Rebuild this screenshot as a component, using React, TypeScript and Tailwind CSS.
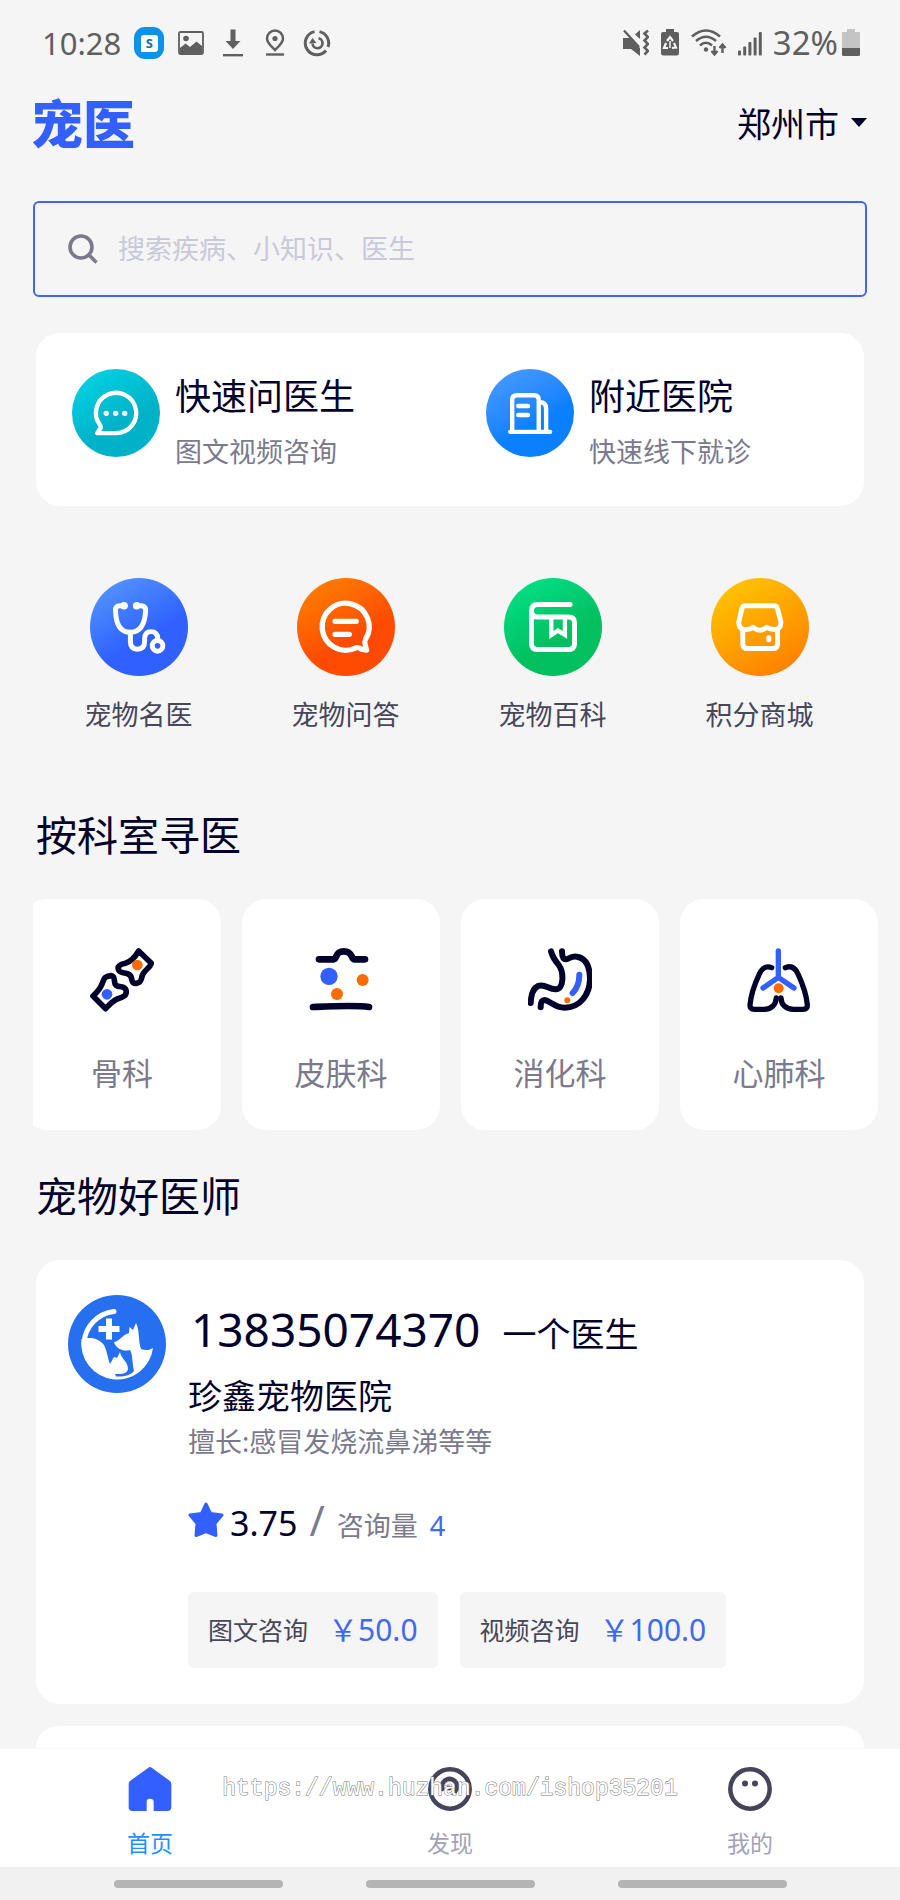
import React, { useState } from "react";

const StatusBar: React.FC = () => (
  <div className="flex h-[86px] items-center justify-between pl-[42px] pr-10 text-[#5f5f5f]">
    <div className="flex items-center gap-[14px]">
      <span className="text-[31px] leading-10">10:28</span>
      <span className="flex h-[30px] w-7 items-center justify-center rounded-[10px] bg-[#0c92ea] ring-1 ring-[#0c92ea]">
        <span className="flex h-[17px] w-[17px] items-center justify-center rounded-[3px] rounded-bl-none bg-white text-[13px] font-bold leading-4 text-[#1668b8]">
          S
        </span>
      </span>
      <svg className="h-7 w-7" viewBox="0 0 28 28" fill="none">
        <rect x="2" y="3" width="24" height="22" rx="1.500" stroke="currentColor" strokeWidth="1.800" />
        <circle cx="9" cy="9.500" r="2.800" fill="currentColor" />
        <path d="M3 19 L8.500 14.500 L13 18 L19.500 12.500 L25 17 V25 H3 Z" fill="currentColor" />
      </svg>
      <svg className="h-7 w-7" viewBox="0 0 28 28" fill="currentColor">
        <path d="M11.500 0.500 H16.500 V12 H21.500 L14 20 L6.500 12 H11.500 Z" />
        <rect x="4" y="25" width="20" height="2.400" />
      </svg>
      <svg className="h-7 w-7" viewBox="0 0 28 28" fill="none" stroke="currentColor">
        <path d="M14 21 C10 17 6 14 6 9.500 A8 8 0 0 1 22 9.500 C22 14 18 17 14 21 Z" strokeWidth="2.500" />
        <circle cx="14" cy="9.500" r="2.600" fill="currentColor" stroke="none" />
        <path d="M5 25.500 H23" strokeWidth="2.400" />
      </svg>
      <svg className="h-7 w-7" viewBox="0 0 28 28" fill="none" stroke="currentColor" strokeWidth="3">
        <path d="M11.500 2.600 A11.700 11.700 0 1 0 23 21.500" />
        <path d="M16.500 2.600 A11.700 11.700 0 0 1 25 18" />
        <path d="M15.500 9.300 A5 5 0 1 1 9.500 14.500" strokeWidth="2.600" />
        <path d="M6 14.500 L9.500 9 L13.500 14 Z" fill="currentColor" stroke="none" />
      </svg>
    </div>

    <div className="flex items-center gap-[11px]">
      <svg className="h-7 w-[26px]" viewBox="0 0 26 28" fill="currentColor">
        <path d="M0 9 H7 L17 19 V27 L8 20 H0 Z" />
        <path d="M17 1 V10 L12 5.500 Z" />
        <path d="M1 1.500 L16 18" stroke="currentColor" strokeWidth="2.400" />
        <path
          d="M25 1.500 L21.500 4.500 L25 8 L21.500 11.500 L25 15 L21.500 18.500 L25 22 L21.500 25.500"
          fill="none"
          stroke="currentColor"
          strokeWidth="2.600"
        />
      </svg>
      <svg className="h-7 w-5" viewBox="0 0 20 28">
        <path d="M6 0 H14 V3 H17 Q19 3 19 5 V24 Q19 26.500 16.500 26.500 H3.500 Q1 26.500 1 24 V5 Q1 3 3 3 H6 Z" fill="currentColor" />
        <path
          d="M7 12 L10 8 L13 12 M14 14 L16 18.500 L12 19 M8 19 H4 L6 14"
          fill="none"
          stroke="#f5f5f5"
          strokeWidth="2.200"
        />
        <path d="M10 19 V12" stroke="#f5f5f5" strokeWidth="1.500" />
      </svg>
      <svg className="h-7 w-9" viewBox="0 0 36 28" fill="none" stroke="currentColor" strokeWidth="2.600">
        <path d="M1 7.500 Q15 -4.500 29 7.500" />
        <path d="M5 12 Q15 3.500 25 12" />
        <path d="M9 16.500 Q15 11 21 16.500" />
        <circle cx="15" cy="20.500" r="2.200" fill="currentColor" stroke="none" />
        <path d="M23.500 17 V24.500 M20.500 22 L23.500 25.500 L26.500 22" strokeWidth="2.400" />
        <path d="M31.500 24 V16.500 M28.500 19 L31.500 15.500 L34.500 19" strokeWidth="2.400" />
      </svg>
      <svg className="h-7 w-6" viewBox="0 0 24 28" fill="currentColor">
        <rect x="0" y="21.500" width="3" height="5" rx="1" />
        <rect x="5.200" y="17.500" width="3" height="9" rx="1" />
        <rect x="10.400" y="13" width="3" height="13.500" rx="1" />
        <rect x="15.600" y="8.500" width="3" height="18" rx="1" />
        <rect x="20.800" y="3" width="3" height="23.500" rx="1" />
      </svg>
      <span className="flex items-center gap-1">
        <span className="text-[33px] leading-10">32%</span>
        <svg className="h-7 w-[18px]" viewBox="0 0 18 28">
          <path d="M5 0 H13 V3 H18 V20 H0 V3 H5 Z" fill="#c4c4c4" />
          <path d="M0 19 H18 V25.500 Q18 27 16.500 27 H1.500 Q0 27 0 25.500 Z" fill="currentColor" />
        </svg>
      </span>
    </div>
  </div>
);

const ChatIcon = () => (
  <svg className="h-full w-full" viewBox="0 0 262 262" fill="none" stroke="#fff" strokeWidth="13" strokeLinejoin="round">
    <path d="M131 191 A60 60 0 1 0 84 168 Q88 174 82 180 L75 191 Z" />
    <g fill="#fff" stroke="none">
      <circle cx="102" cy="132" r="8" />
      <circle cx="130" cy="132" r="8" />
      <circle cx="157" cy="132" r="8" />
    </g>
  </svg>
);

const HospitalIcon = () => (
  <svg className="h-full w-full" viewBox="0 0 262 262" fill="none" stroke="#fff" strokeWidth="13" strokeLinecap="round">
    <path d="M78 186 V92 Q78 78 92 78 H143 Q157 78 157 92 V186" />
    <path d="M160 99 Q179 99 179 118 V186" />
    <path d="M72 187 H191" />
    <path d="M96 110 H125 M96 137 H125" />
  </svg>
);

const StethoscopeIcon = () => (
  <svg className="h-full w-full" viewBox="0 0 296 296" fill="none" stroke="#fff" strokeWidth="15" strokeLinecap="round">
    <path d="M103 84 H90 Q76 84 77 98 C78 142 94 164 122 164 C150 164 166 142 168 98 Q168 86 156 84 H141" />
    <circle cx="103" cy="84" r="4" />
    <circle cx="141" cy="84" r="4" />
    <path d="M122 164 V192 Q122 215 143 215 Q165 215 165 192 V184 Q165 162 184 162 Q204 162 205 184" />
    <circle cx="204" cy="205" r="16" />
  </svg>
);

const QuestionIcon = () => (
  <svg className="h-full w-full" viewBox="0 0 296 296" fill="none" stroke="#fff" strokeWidth="16" strokeLinecap="round" strokeLinejoin="round">
    <path d="M178 211 A71 71 0 1 1 207 185 Q203 194 206 202 L210 218 L194 215 Q186 209 178 211 Z" />
    <path d="M115 131 H179 M115 170 H158" />
  </svg>
);

const BookIcon = () => (
  <svg className="h-full w-full" viewBox="0 0 296 296" fill="none" stroke="#fff" strokeWidth="15" strokeLinecap="round">
    <path d="M200 80 H102 Q83 80 83 99 V198 Q83 216 101 216 H195 Q213 216 213 198 V136 Q213 118 195 118 H102 Q83 118 83 99" />
    <path d="M143 118 V172 L163 159 L184 172 V118" strokeWidth="13" />
  </svg>
);

const ShopIcon = () => (
  <svg className="h-full w-full" viewBox="0 0 296 296" fill="none" stroke="#fff" strokeWidth="15" strokeLinejoin="round">
    <path d="M104 84 H190 Q199 84 201 94 L211 132 Q212 153 195 155 Q182 157 168 149 Q148 166 127 149 Q113 158 99 155 Q83 152 84 132 L93 94 Q95 84 104 84 Z" />
    <path d="M96 155 V199 Q96 213 110 213 H187 Q201 213 201 199 V155" />
    <rect x="167" y="173" width="15" height="21" rx="6" fill="#fff" stroke="none" />
  </svg>
);

const BoneIcon = () => (
  <svg className="h-16 w-16" viewBox="0 0 192 192" fill="none" stroke="#02022a" strokeWidth="17" strokeLinejoin="round">
    <path d="M146 9 L184 46 C180 60 166 64 159 78 C152 90 158 102 140 106 C122 108 128 94 122 84 C112 70 96 80 87 68 C79 54 92 49 106 46 C126 40 136 26 146 9 Z" />
    <path d="M47 182 L9 144 C22 132 30 124 36 108 C42 92 44 84 62 83 C80 86 68 102 78 112 C90 120 104 112 108 126 C112 144 98 148 84 152 C66 160 60 168 47 182 Z" />
    <circle cx="142" cy="51" r="16" fill="#ff6b00" stroke="none" />
    <circle cx="51" cy="139" r="16" fill="#335fff" stroke="none" />
  </svg>
);

const SkinIcon = () => (
  <svg className="h-16 w-16" viewBox="0 0 192 192" fill="none" stroke="#02022a" strokeWidth="20" strokeLinecap="round">
    <path d="M30 34 H74 C84 34 78 10 104 10 C132 10 126 34 136 34 H168" />
    <path d="M12 177 C60 175 140 171 180 177" />
    <circle cx="60" cy="85" r="26" fill="#335fff" stroke="none" />
    <circle cx="161" cy="96" r="18" fill="#ff6b00" stroke="none" />
    <circle cx="84" cy="138" r="18" fill="#ff6b00" stroke="none" />
  </svg>
);

const StomachIcon = () => (
  <svg className="h-16 w-16" viewBox="0 0 192 192" fill="none" stroke="#02022a" strokeWidth="18" strokeLinecap="round">
    <path d="M69 10 C75 30 80 36 93 52 C108 74 108 126 82 124 C62 124 50 106 30 114 C14 122 9 140 8 165" />
    <path d="M102 10 C102 24 104 34 114 34 C124 32 130 24 146 26 C176 30 186 60 186 96 C184 140 156 179 110 179 C80 179 66 158 50 156 C40 156 38 166 38 178" />
    <path d="M154 80 C154 104 148 120 134 135" stroke="#335fff" />
    <circle cx="118" cy="157" r="9" fill="#ff6b00" stroke="none" />
  </svg>
);

const LungIcon = () => (
  <svg className="h-16 w-16" viewBox="0 0 192 192" fill="none" stroke="#02022a" strokeWidth="16" strokeLinecap="round" strokeLinejoin="round">
    <path d="M74 59 C60 53 46 58 37 78 C22 110 12 140 9 170 Q8 184 22 184 H52 C74 184 86 170 88 150" />
    <path d="M115 59 C130 53 144 58 153 78 C168 110 178 140 181 170 Q182 184 168 184 H140 C116 184 103 170 102 150" />
    <path d="M94 9 V88 L48 120 M94 88 L141 120" stroke="#335fff" />
    <circle cx="95" cy="121" r="15" fill="#ff6b00" stroke="none" />
  </svg>
);

const PetAvatar = () => (
  <svg className="h-[98px] w-[98px] shrink-0" viewBox="0 0 98 98">
    <circle cx="49" cy="49" r="49" fill="#2670f0" />
    <path d="M46 16.500 A34 34 0 0 0 16 48" fill="none" stroke="#fff" strokeWidth="5" strokeLinecap="round" />
    <path d="M41 23.500 V44.500 M30.500 34 H51.500" stroke="#fff" strokeWidth="6" />
    <path
      d="M13.500 44 C20 42 30 42 36 50 C39 56 40 64 42 69 C44 66 45 63 46 62 L49 63 L52 57 C53 64 60 66 60 74 C59 79 54 79 47 79 L48 81.500 C56 82 63 80 66 76 C64 68 65 60 62 55 C56 57 48 54 46 47 C52 46 54 40 61 38 L61.500 32 L65 35 L68 28 C72 36 70 46 73 54 C78 56 82 55 85 53 A36 36 0 0 1 13.500 44 Z"
      fill="#fff"
    />
  </svg>
);

const HomeIcon = () => (
  <svg className="h-11 w-11" viewBox="0 0 132 132">
    <path
      d="M61 2 Q66 -2 71 2 L126 42 Q130 46 130 52 V120 Q130 132 118 132 H77 V104 Q77 95 66 95 Q56 95 56 104 V132 H14 Q2 132 2 120 V52 Q2 46 6 42 Z"
      fill="#335fff"
    />
  </svg>
);

const DiscoverIcon = () => (
  <svg className="h-11 w-11" viewBox="0 0 44 44" fill="none" stroke="#45445a" strokeWidth="4.500">
    <circle cx="22" cy="22" r="19.700" />
    <path d="M14.500 22 A7.500 7.500 0 1 1 25 26" strokeLinecap="round" />
    <circle cx="21" cy="21" r="2.500" fill="#45445a" stroke="none" />
  </svg>
);

const MineIcon = () => (
  <svg className="h-11 w-11" viewBox="0 0 44 44" fill="none" stroke="#45445a" strokeWidth="4.500">
    <circle cx="22" cy="22" r="19.700" />
    <circle cx="17" cy="16.500" r="3" fill="#45445a" stroke="none" />
    <circle cx="27" cy="16.500" r="3" fill="#45445a" stroke="none" />
  </svg>
);

const consults = [
  { title: "快速问医生", desc: "图文视频咨询", icon: <ChatIcon />, bg: "bg-linear-150 from-[#00d8e8] to-[#00b2c8] to-60%" },
  { title: "附近医院", desc: "快速线下就诊", icon: <HospitalIcon />, bg: "bg-linear-150 from-[#4c9dff] to-[#0a80ff] to-60%" },
];

const services = [
  { name: "宠物名医", icon: <StethoscopeIcon />, bg: "bg-linear-150 from-[#5a9bff] to-[#3060ff] to-60%" },
  { name: "宠物问答", icon: <QuestionIcon />, bg: "bg-linear-150 from-[#ff8400] to-[#ff4b00] to-60%" },
  { name: "宠物百科", icon: <BookIcon />, bg: "bg-linear-150 from-[#00e58c] to-[#02c060] to-60%" },
  { name: "积分商城", icon: <ShopIcon />, bg: "bg-linear-150 from-[#ffcc00] to-[#ff7e00] to-90%" },
];

const departments = [
  { name: "骨科", icon: <BoneIcon /> },
  { name: "皮肤科", icon: <SkinIcon /> },
  { name: "消化科", icon: <StomachIcon /> },
  { name: "心肺科", icon: <LungIcon /> },
];

const prices = [
  { name: "图文咨询", price: "50.0" },
  { name: "视频咨询", price: "100.0" },
];

const tabs = [
  { name: "首页", icon: <HomeIcon /> },
  { name: "发现", icon: <DiscoverIcon /> },
  { name: "我的", icon: <MineIcon /> },
];

const App: React.FC = () => {
  const [keyword, setKeyword] = useState("");
  const [activeTab, setActiveTab] = useState("首页");

  return (
    <div className="flex min-h-screen flex-col bg-[#f5f5f5] font-['Noto_Sans','Noto_Sans_CJK_SC',sans-serif] text-[#02022a]">
      <StatusBar />

      <header className="flex h-[76px] items-center justify-between pl-[31px] pr-[33px]">
        <h1 className="text-[52px] font-black leading-[52px] text-[#335fff]">宠医</h1>
        <button className="flex items-center gap-3 text-[34px] leading-10">
          郑州市
          <svg className="h-4 w-4" viewBox="0 0 16 16">
            <path d="M0 2 H16 L8 11 Z" fill="currentColor" />
          </svg>
        </button>
      </header>

      <main className="flex flex-1 flex-col">
        {/* Search */}
        <label className="mx-[33px] mt-[39px] flex h-24 items-center gap-5 rounded-md border-2 border-[#3d67f2] pl-[33px] pr-8">
          <svg className="h-[30px] w-[30px]" viewBox="0 0 30 30" fill="none" stroke="#7b7a8c" strokeWidth="3.600">
            <circle cx="13" cy="13" r="11" />
            <path d="M21 21 L28.500 28.500" />
          </svg>
          <input
            type="text"
            aria-label="搜索疾病、小知识、医生"
            value={keyword}
            onChange={(e) => setKeyword(e.target.value)}
            placeholder="搜索疾病、小知识、医生"
            className="min-w-0 flex-1 bg-transparent text-[27px] leading-10 outline-none placeholder:text-[#c9c9d9]"
          />
        </label>

        {/* Consult entries */}
        <section className="mx-9 mt-9 grid grid-cols-2 rounded-3xl bg-white py-9">
          {consults.map(({ title, desc, icon, bg }) => (
            <a key={title} href="#" className="flex gap-[15px] pl-9">
              <span className={`h-[88px] w-[88px] shrink-0 rounded-full ${bg}`}>{icon}</span>
              <span>
                <span className="block text-[36px] leading-[56px]">{title}</span>
                <span className="mt-[9px] block text-[27px] leading-9 text-[#7b7a8c]">{desc}</span>
              </span>
            </a>
          ))}
        </section>

        {/* Services */}
        <section className="mx-9 mt-[72px] grid grid-cols-4">
          {services.map(({ name, icon, bg }) => (
            <a key={name} href="#" className="flex flex-col items-center pr-[2px]">
              <span className={`h-[98px] w-[98px] rounded-full ${bg}`}>{icon}</span>
              <span className="mt-5 text-[27px] leading-[38px] text-[#48475a]">{name}</span>
            </a>
          ))}
        </section>

        {/* Departments */}
        <h2 className="mx-9 mt-[71px] text-[41px] leading-[60px]">按科室寻医</h2>
        <div className="ml-[33px] mt-[34px] overflow-hidden">
          <div className="-ml-[10px] flex gap-[21px]">
            {departments.map(({ name, icon }) => (
              <a
                key={name}
                href="#"
                className="flex w-[198px] shrink-0 flex-col items-center rounded-3xl bg-white pb-[37px] pt-[49px]"
              >
                {icon}
                <span className="mt-[41px] text-[31px] leading-10 text-[#7b7a8c]">{name}</span>
              </a>
            ))}
          </div>
        </div>

        {/* Doctors */}
        <h2 className="mx-9 mt-9 text-[41px] leading-[60px]">宠物好医师</h2>
        <article className="mx-9 mt-[34px] flex gap-[22px] rounded-3xl bg-white px-8 pb-9 pt-[35px]">
          <PetAvatar />
          <div className="min-w-0">
            <div className="flex items-baseline gap-[22px] pl-[3px] pt-1">
              <h3 className="text-[46px] leading-[60px]">13835074370</h3>
              <span className="text-[34px] leading-[44px]">一个医生</span>
            </div>
            <p className="mt-[15px] text-[34px] leading-[44px]">珍鑫宠物医院</p>
            <p className="mt-1 text-[27px] leading-10 text-[#7b7a8c]">擅长:感冒发烧流鼻涕等等</p>
            <div className="mt-9 flex h-11 items-baseline text-[27px] leading-[44px] text-[#7b7a8c]">
              <svg className="h-9 w-9 self-center" viewBox="0 0 36 36">
                <path
                  d="M18 2 L22.500 11.500 L34 13 L27 21.500 L28 33.500 L18 29.500 L8 33.500 L9 21.500 L2 13 L13.500 11.500 Z"
                  fill="#335fff"
                  stroke="#335fff"
                  strokeWidth="3"
                  strokeLinejoin="round"
                />
              </svg>
              <span className="ml-[6px] text-[34px] text-[#02022a]">3.75</span>
              <span className="ml-3 text-[41px]">/</span>
              <span className="ml-3">咨询量</span>
              <span className="ml-3 text-[#4169ec]">4</span>
            </div>
            <div className="mt-[50px] flex gap-[22px]">
              {prices.map(({ name, price }) => (
                <button key={name} className="flex h-[76px] items-center gap-5 rounded-md bg-[#f5f5f5] px-5">
                  <span className="text-[25px] leading-9 text-[#48475a]">{name}</span>
                  <span className="text-[30px] leading-9 text-[#4169ec]">￥{price}</span>
                </button>
              ))}
            </div>
          </div>
        </article>
        <article className="mx-9 mt-[22px] min-h-5 flex-1 rounded-t-3xl bg-white" />
      </main>

      <nav className="relative grid grid-cols-3 border-t border-[#fafafa] bg-white pb-1 pt-[18px]">
        {tabs.map(({ name, icon }) => (
          <button key={name} onClick={() => setActiveTab(name)} className="flex flex-col items-center">
            {icon}
            <span
              className={`mt-3 text-[23px] leading-10 ${activeTab === name ? "text-[#1e90ff]" : "text-[#a3a2b5]"}`}
            >
              {name}
            </span>
          </button>
        ))}
        <span className="pointer-events-none absolute inset-x-0 top-6 text-center font-['Liberation_Mono',monospace] text-[23px] leading-8 text-white [-webkit-text-stroke:1px_#777] [paint-order:stroke_fill]">
          https://www.huzhan.com/ishop35201
        </span>
      </nav>
      <div className="flex h-[33px] items-center justify-center gap-[83px] bg-[#f1f1f1]">
        <span className="h-2 w-[169px] rounded-full bg-[#b4b4b4]" />
        <span className="h-2 w-[169px] rounded-full bg-[#b4b4b4]" />
        <span className="h-2 w-[169px] rounded-full bg-[#b4b4b4]" />
      </div>
    </div>
  );
};

export default App;
